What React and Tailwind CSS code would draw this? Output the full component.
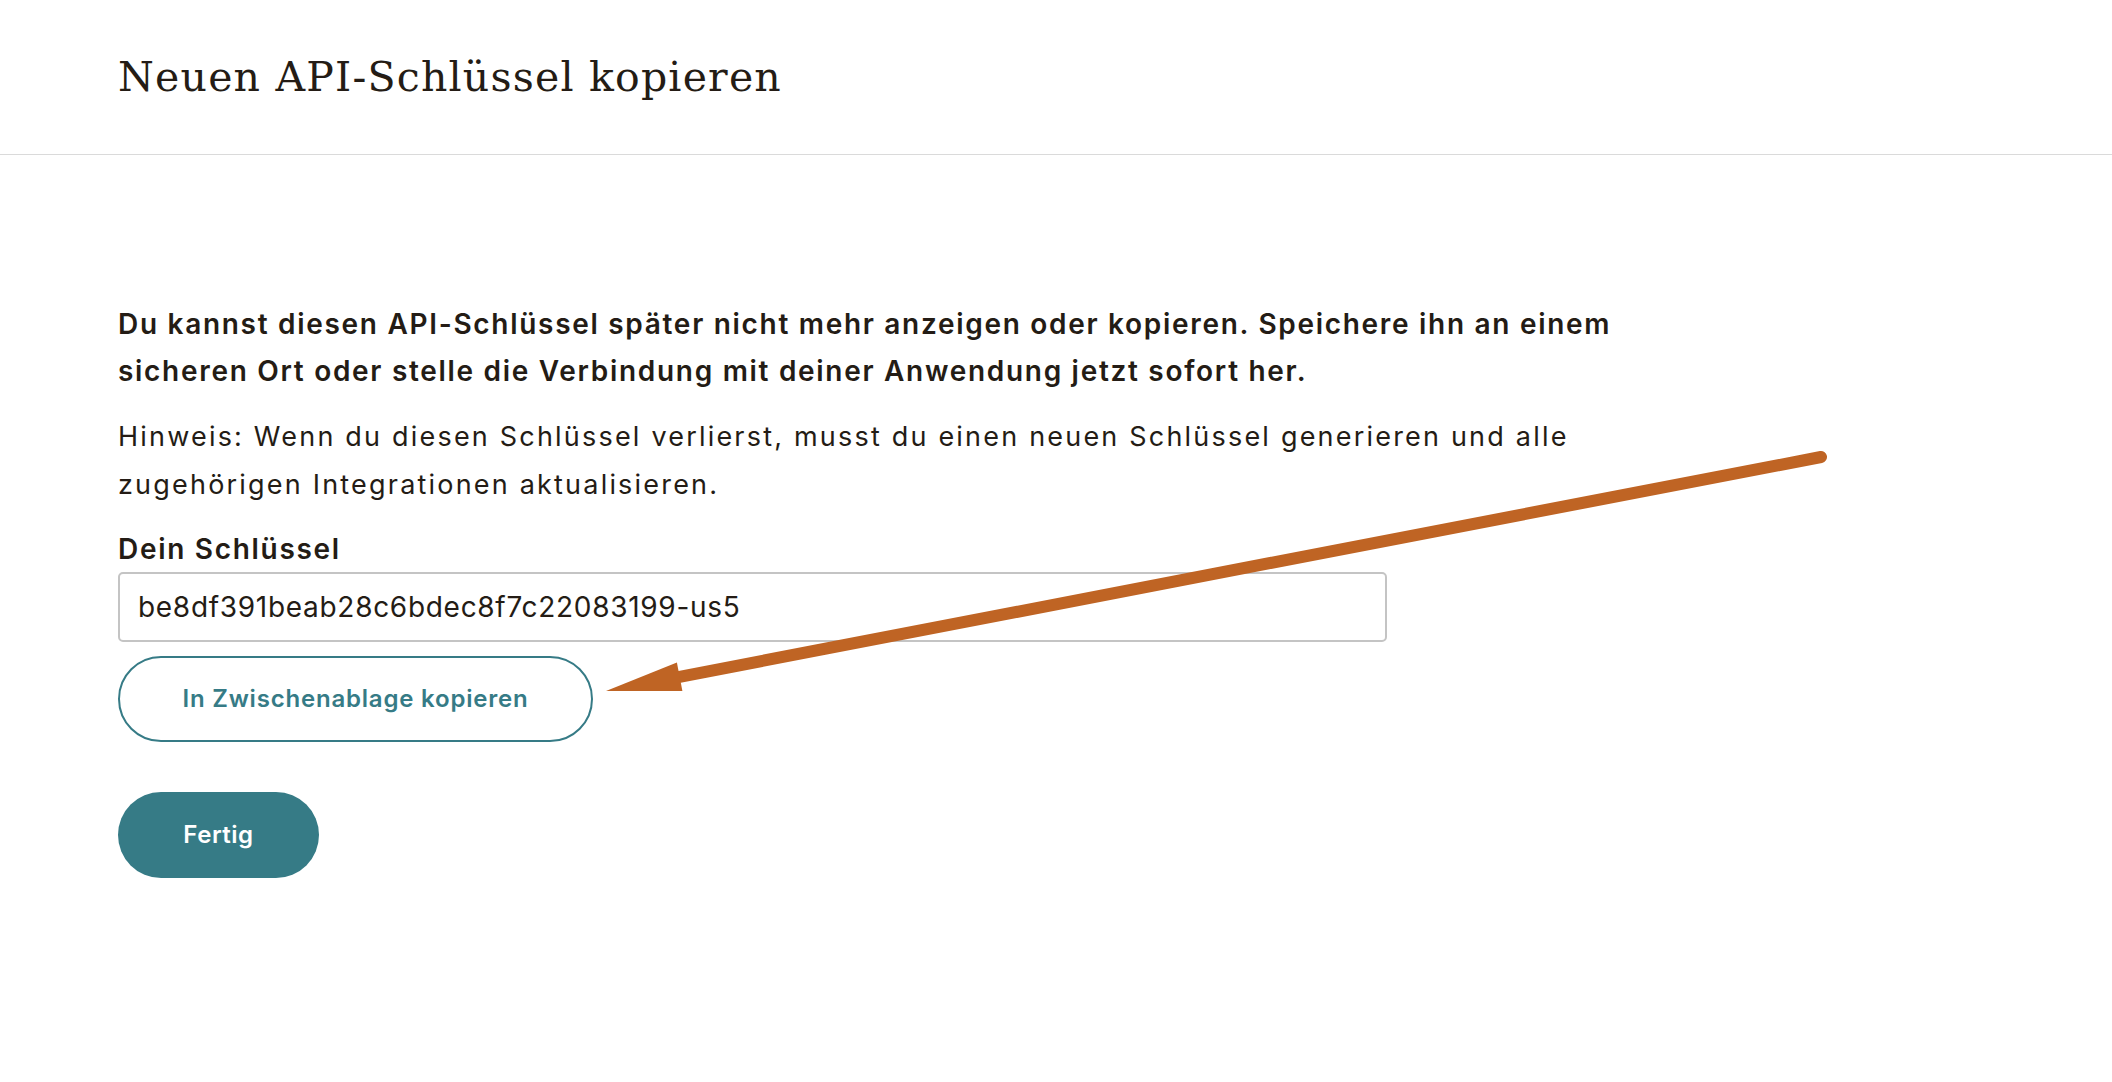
import React from "react";

const KEY = "be8df391beab28c6bdec8f7c22083199-us5";

const App = () => {
    return (
        <div className="relative min-h-screen bg-white text-[#241c15] font-['Inter',Arial,sans-serif]">
            {/* Kopfzeile */}
            <header className="h-[155px] border-b border-[#dadada] flex items-center px-[118px]">
                <h1 className="font-['DejaVu_Serif',serif] text-[41px] leading-none tracking-[1.2px]">
                    Neuen API-Schlüssel kopieren
                </h1>
            </header>

            <main className="px-[118px] pt-[146px]">
                <div className="max-w-[1560px]">
                    <p className="text-[28px] font-semibold leading-[47px] tracking-[1.7px]">
                        Du kannst diesen API-Schlüssel später nicht mehr anzeigen oder kopieren. Speichere ihn an einem sicheren Ort oder stelle die Verbindung mit deiner Anwendung jetzt sofort her.
                    </p>
                    <p className="mt-[18px] text-[27px] leading-[48px] tracking-[2.2px]">
                        Hinweis: Wenn du diesen Schlüssel verlierst, musst du einen neuen Schlüssel generieren und alle zugehörigen Integrationen aktualisieren.
                    </p>
                </div>

                <label className="block mt-[20px] text-[28px] font-semibold leading-[40px] tracking-[1.7px]">Dein Schlüssel</label>
                <input
                    type="text"
                    readOnly
                    value={KEY}
                    className="mt-[3px] block w-[1269px] h-[70px] border-2 border-[#c4c4c4] rounded-[5px] pl-[18px] text-[28px] tracking-[0.7px] text-[#241c15] outline-none"
                />

                <button className="mt-[14px] block w-[475px] h-[86px] rounded-full border-2 border-[#367b86] text-[#367b86] text-[24px] font-semibold tracking-[0.8px]">
                    In Zwischenablage kopieren
                </button>

                <button className="mt-[50px] block w-[201px] h-[86px] rounded-full bg-[#367b86] text-white text-[24px] font-semibold tracking-[0.5px]">
                    Fertig
                </button>
            </main>

            {/* Markierungspfeil */}
            <svg
                className="absolute top-0 left-0 pointer-events-none"
                width="2112"
                height="1082"
                viewBox="0 0 2112 1082"
            >
                <line x1="1821" y1="457" x2="679.6" y2="676.8" stroke="#bf6424" strokeWidth="12" strokeLinecap="round" />
                <polygon points="606,691 676.9,662.6 682.4,691" fill="#bf6424" />
            </svg>
        </div>
    );
};

export default App;
